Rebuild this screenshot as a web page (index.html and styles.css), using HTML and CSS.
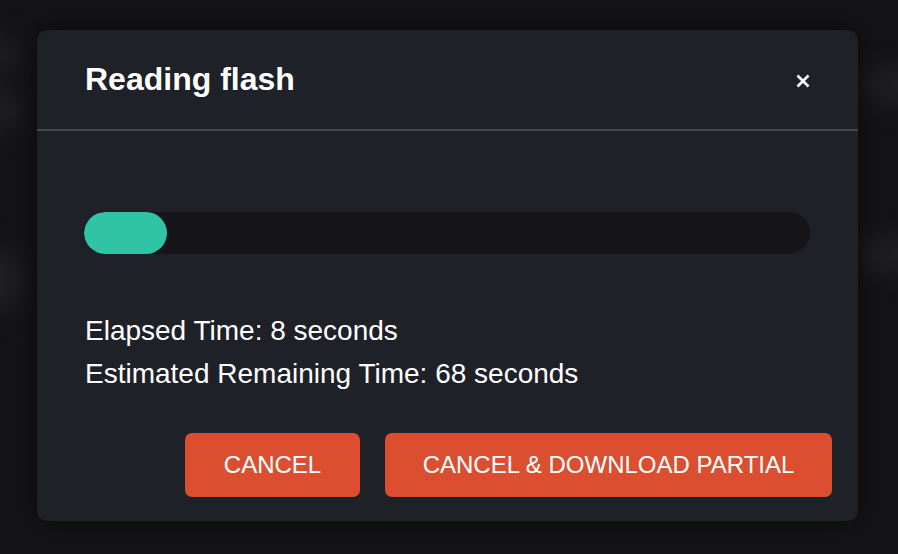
FILE: index.html
```html
<!DOCTYPE html>
<html>
<head>
<meta charset="utf-8">
<link rel="stylesheet" href="styles.css">
</head>
<body>
<div class="backdrop">
  <span class="blob b1"></span>
  <span class="blob b2"></span>
  <span class="blob b3"></span>
  <span class="blob b4"></span>
  <span class="blob b5"></span>
</div>
<div class="modal">
  <div class="modal-header">
    <h2 class="title">Reading flash</h2>
    <button class="close" aria-label="Close">
      <svg width="14" height="14" viewBox="0 0 14 14"><path d="M1.5 1.5 L12.5 12.5 M12.5 1.5 L1.5 12.5" stroke="#fff" stroke-width="2.6" stroke-linecap="butt"/></svg>
    </button>
  </div>
  <div class="modal-body">
    <div class="progress"><div class="progress-fill" style="width: 83px"></div></div>
    <div class="times">
      <p>Elapsed Time: 8 seconds</p>
      <p>Estimated Remaining Time: 68 seconds</p>
    </div>
    <div class="actions">
      <button class="btn btn-small">CANCEL</button>
      <button class="btn btn-wide">CANCEL &amp; DOWNLOAD PARTIAL</button>
    </div>
  </div>
</div>
</body>
</html>
```

FILE: styles.css
```css
html, body {
  margin: 0;
  padding: 0;
  height: 100%;
}
body {
  background: #141416;
  font-family: "Liberation Sans", Arial, sans-serif;
  color: #fff;
  overflow: hidden;
  position: relative;
}
.backdrop {
  position: absolute;
  inset: 0;
}
.blob {
  position: absolute;
  background: #2a2a2c;
  filter: blur(14px);
  border-radius: 20px;
  opacity: 0.7;
}
.b1 { left: -20px; top: 40px; width: 40px; height: 30px; }
.b2 { left: -20px; top: 90px; width: 40px; height: 40px; }
.b3 { left: -20px; top: 250px; width: 40px; height: 60px; }
.b4 { left: 860px; top: 70px; width: 60px; height: 30px; }
.b5 { left: 860px; top: 240px; width: 60px; height: 30px; }
.modal {
  position: absolute;
  left: 37px;
  top: 30px;
  width: 821px;
  height: 491px;
  background: #1f2128;
  border-radius: 10px;
  box-shadow: 0 0 30px rgba(0,0,0,0.5);
  display: flex;
  flex-direction: column;
  box-sizing: border-box;
}
.modal-header {
  height: 101px;
  box-sizing: border-box;
  border-bottom: 2px solid #45474e;
  display: flex;
  align-items: center;
  justify-content: space-between;
  padding: 0 48px 0 48px;
}
.title {
  margin: 0;
  font-size: 32px;
  font-weight: bold;
  line-height: 1;
  position: relative;
  top: -1px;
}
.close {
  background: none;
  border: 0;
  padding: 0;
  width: 14px;
  height: 14px;
  display: flex;
  cursor: pointer;
  position: relative;
  top: 1px;
}
.modal-body {
  flex: 1;
  display: flex;
  flex-direction: column;
  padding: 81px 26px 24px 47px;
}
.progress {
  width: 726px;
  height: 42px;
  background: #16151a;
  border-radius: 21px;
  overflow: hidden;
}
.progress-fill {
  height: 100%;
  background: #2ec4a5;
  border-radius: 21px;
}
.times {
  margin-top: 55px;
  padding-left: 1px;
}
.times p {
  margin: 0;
  font-size: 28px;
  line-height: 43px;
}
.actions {
  margin-top: auto;
  display: flex;
  justify-content: flex-end;
  gap: 25px;
}
.btn {
  height: 64px;
  background: #db4f30;
  color: #fff;
  border: 0;
  border-radius: 7px;
  font-family: "Liberation Sans", Arial, sans-serif;
  font-size: 24px;
  padding: 0;
  cursor: pointer;
}
.btn-small { width: 175px; }
.btn-wide { width: 447px; }
```
